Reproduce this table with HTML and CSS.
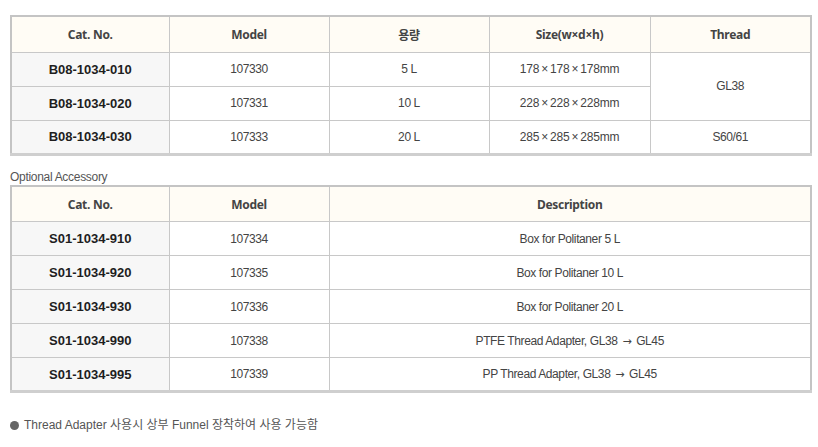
FILE: index.html
```html
<!DOCTYPE html>
<html lang="ko">
<head>
<meta charset="utf-8">
<link rel="stylesheet" href="styles.css">
</head>
<body>
<div class="page">
  <table class="spec spec-main">
    <colgroup>
      <col class="c1"><col class="c2"><col class="c3"><col class="c4"><col class="c5">
    </colgroup>
    <thead>
      <tr><th>Cat. No.</th><th>Model</th><th>용량</th><th>Size(w×d×h)</th><th>Thread</th></tr>
    </thead>
    <tbody>
      <tr><td class="cat">B08-1034-010</td><td>107330</td><td>5 L</td><td class="size">178<span class="x">×</span>178<span class="x">×</span>178mm</td><td rowspan="2">GL38</td></tr>
      <tr><td class="cat">B08-1034-020</td><td>107331</td><td>10 L</td><td class="size">228<span class="x">×</span>228<span class="x">×</span>228mm</td></tr>
      <tr><td class="cat">B08-1034-030</td><td>107333</td><td>20 L</td><td class="size">285<span class="x">×</span>285<span class="x">×</span>285mm</td><td>S60/61</td></tr>
    </tbody>
  </table>

  <p class="label">Optional Accessory</p>

  <table class="spec spec-acc">
    <colgroup>
      <col class="c1"><col class="c2"><col class="cd">
    </colgroup>
    <thead>
      <tr><th>Cat. No.</th><th>Model</th><th>Description</th></tr>
    </thead>
    <tbody>
      <tr><td class="cat">S01-1034-910</td><td>107334</td><td>Box for Politaner 5 L</td></tr>
      <tr><td class="cat">S01-1034-920</td><td>107335</td><td>Box for Politaner 10 L</td></tr>
      <tr><td class="cat">S01-1034-930</td><td>107336</td><td>Box for Politaner 20 L</td></tr>
      <tr><td class="cat">S01-1034-990</td><td>107338</td><td>PTFE Thread Adapter, GL38 <span class="arrow">→</span> GL45</td></tr>
      <tr><td class="cat">S01-1034-995</td><td>107339</td><td>PP Thread Adapter, GL38 <span class="arrow">→</span> GL45</td></tr>
    </tbody>
  </table>

  <p class="note"><span class="dot"></span>Thread Adapter 사용시 상부 Funnel 장착하여 사용 가능함</p>
</div>
</body>
</html>
```

FILE: styles.css
```css
html, body {
  margin: 0;
  padding: 0;
  background: #ffffff;
}

body {
  font-family: "Liberation Sans", "Noto Sans CJK KR", sans-serif;
  color: #444;
}

.page {
  padding: 15px 8px 0 10px;
}

.spec {
  width: 800px;
  border-collapse: collapse;
  table-layout: fixed;
  border-top: 2px solid #c4c4c4;
  border-bottom: 3px solid #cfcfcf;
  border-left: 2px solid #c4c4c4;
  border-right: 2px solid #c4c4c4;
}

.c1 { width: 158px; }
.c2 { width: 160px; }
.c3 { width: 160px; }
.c4 { width: 161px; }
.c5 { width: 161px; }
.cd { width: 482px; }

.spec tr {
  height: 34px;
}

.spec thead tr {
  height: 36px;
}

.spec th,
.spec td {
  border: 1px solid #c8c8c8;
  text-align: center;
  vertical-align: middle;
  padding: 0;
}

.spec th {
  background: #fffcf5;
  font-family: "Noto Sans", "Noto Sans CJK KR", sans-serif;
  font-weight: 700;
  font-size: 12px;
  color: #444;
  letter-spacing: -0.3px;
  padding-top: 1px;
}

.spec td {
  font-family: "Liberation Sans", "Noto Sans CJK KR", sans-serif;
  font-size: 12px;
  color: #444;
  letter-spacing: -0.4px;
}

.spec td.size {
  letter-spacing: -0.2px;
}

.x {
  margin: 0 2px;
}

.spec td.cat {
  background: #f7f7f7;
  font-family: "Liberation Sans", sans-serif;
  font-weight: 700;
  font-size: 13px;
  color: #1e1e1e;
  letter-spacing: 0;
}

.arrow {
  font-family: "DejaVu Sans", sans-serif;
  font-size: 11px;
  margin: 0 2px;
}

.label {
  margin: 14px 0 1px 0;
  font-size: 12px;
  line-height: 14px;
  color: #555;
  letter-spacing: -0.3px;
}

.note {
  margin: 24px 0 0 0;
  display: flex;
  align-items: center;
  font-size: 12px;
  line-height: 16px;
  color: #555;
  letter-spacing: 0;
}

.dot {
  display: inline-block;
  width: 9px;
  height: 9px;
  border-radius: 50%;
  background: #666;
  margin-right: 5px;
}
```
